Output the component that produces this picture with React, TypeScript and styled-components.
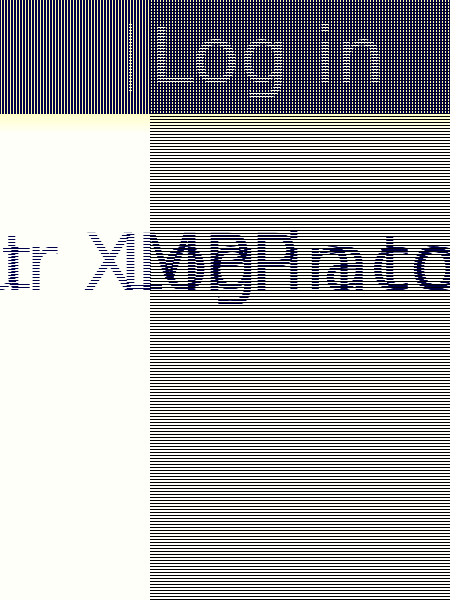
import React from "react";
import styled, { createGlobalStyle } from "styled-components";

const Global = createGlobalStyle`
  body { margin: 0; background: #fffffa; }
`;

const Page = styled.div`
  min-height: 100vh;
  display: flex;
  flex-direction: column;
  overflow: hidden;
  font-family: "DejaVu Sans", sans-serif;
  font-size: 78px;
  line-height: 112px;
`;

const Header = styled.header`
  display: flex;
  height: 114px;
  background: repeating-linear-gradient(90deg, #00004b 0 1px, #ffffaa 1px 2px, #00004b 2px 3px);
`;

const Gutter = styled.div`
  width: calc(100% / 3);
  display: flex;
  justify-content: flex-end;
`;

const Caret = styled.span`
  width: 3px;
  height: 68px;
  margin: 24px 18px 0 0;
  background: repeating-linear-gradient(#ffffd8 0 1px, transparent 1px 3px);
`;

const Bar = styled.div`
  flex: 1;
  background: repeating-linear-gradient(transparent 0 2px, #00001e 2px 3px);
`;

const Title = styled.h1`
  margin: 0;
  font-size: inherit;
  font-weight: 400;
  white-space: pre;
  color: transparent;
  background: repeating-linear-gradient(#fffff0 0 1px, transparent 1px 3px);
  background-clip: text;
`;

const Body = styled.main`
  flex: 1;
  display: grid;
  grid-template-columns: 1fr 2fr;
  position: relative;
  background: linear-gradient(#ffffc8, #fffffa 20px);
`;

const Lines = styled.div`
  grid-column: 2;
  background: repeating-linear-gradient(transparent 0 2px, #000 2px 3px);
`;

const Message = styled.p<{ $x: number; $phase: number }>`
  position: absolute;
  top: 93px;
  left: ${(p) => p.$x}px;
  margin: 0;
  white-space: pre;
  color: transparent;
  background: repeating-linear-gradient(#00004b 0 1px, transparent 1px 3px) 0 ${(p) => p.$phase}px;
  background-clip: text;
`;

export default function App() {
  return (
    <Page>
      <Global />
      <Header>
        <Gutter><Caret /></Gutter>
        <Bar><Title>Log in</Title></Bar>
      </Header>
      <Body>
        <Lines />
        <Message $x={1} $phase={2}>t</Message>
        <Message $x={-24} $phase={1}>ur XMPP acc</Message>
        <Message $x={119} $phase={0}>Log in to</Message>
      </Body>
    </Page>
  );
}
